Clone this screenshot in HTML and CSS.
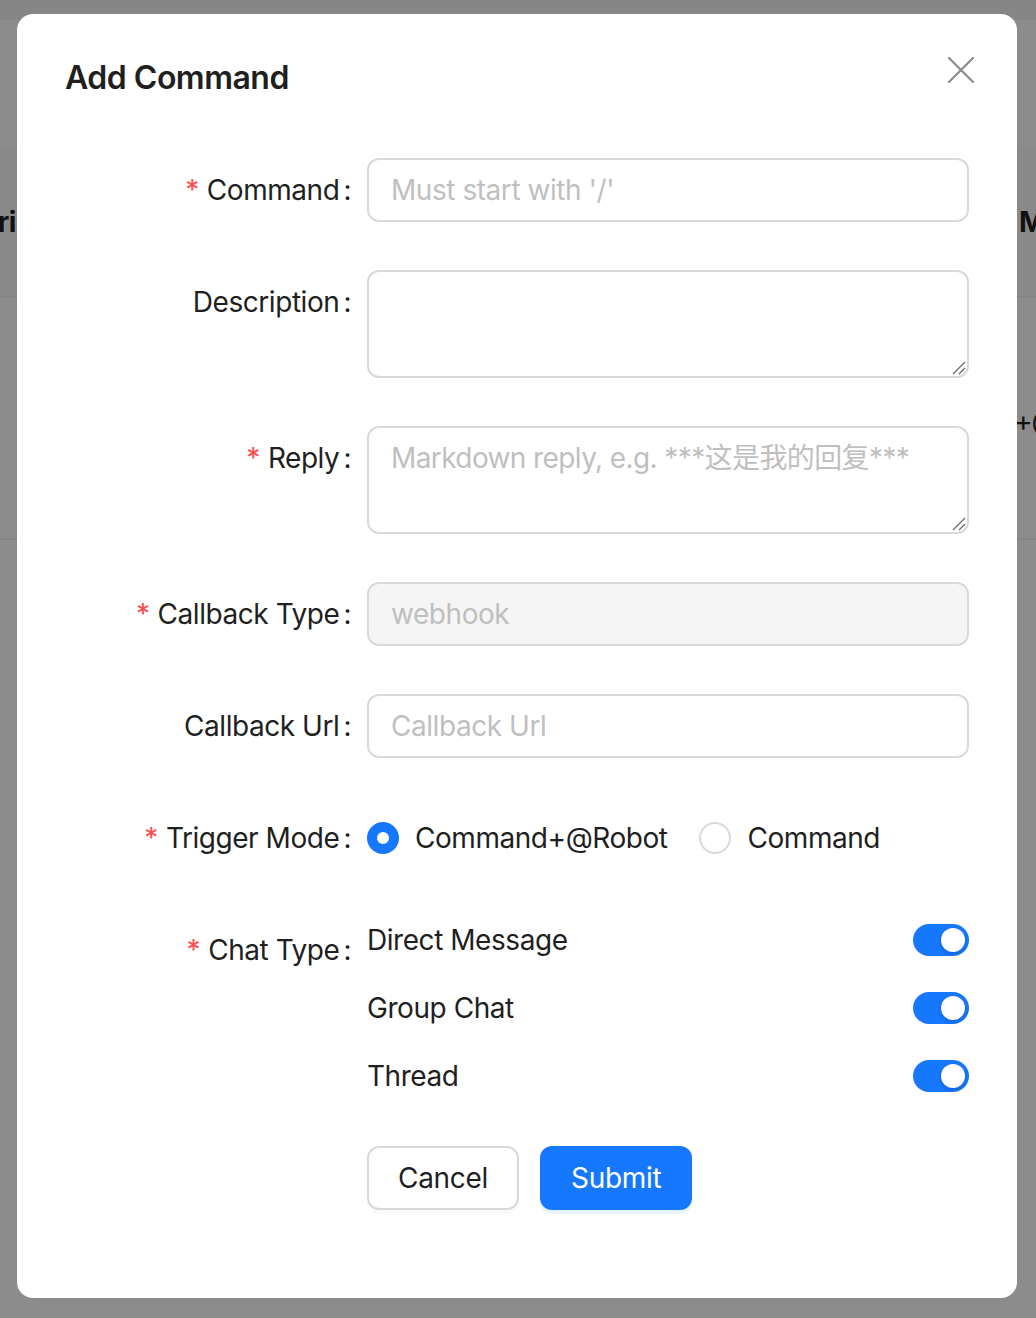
FILE: index.html
```html
<!DOCTYPE html>
<html lang="en">
<head>
<meta charset="utf-8">
<title>Add Command</title>
<link rel="stylesheet" href="styles.css">
</head>
<body>
<div class="page">
  <div class="topbar"></div>
  <div class="card">
    <div class="trow thead">
      <div class="cell cell-first"><span>ri</span></div>
      <div class="cell"></div>
      <div class="cell cell-last">M</div>
    </div>
    <div class="trow tbody">
      <div class="cell cell-first"><span></span></div>
      <div class="cell"></div>
      <div class="cell cell-row">+@</div>
    </div>
  </div>
</div>
<div class="mask"></div>
<div class="modal">
  <button class="close" aria-label="Close">
    <svg width="26" height="26" viewBox="0 0 26 26"><path d="M1 1 L25 25 M25 1 L1 25" stroke="#8c8c8c" stroke-width="2.2" fill="none" stroke-linecap="round"/></svg>
  </button>
  <div class="modal-title">Add Command</div>
  <form class="form">
    <div class="item">
      <div class="label"><span class="req">*</span>Command<span class="colon">:</span></div>
      <div class="control"><div class="input"><span class="ph">Must start with '/'</span></div></div>
    </div>
    <div class="item">
      <div class="label">Description<span class="colon">:</span></div>
      <div class="control"><div class="input textarea"><span class="ph"></span>
        <svg class="grip" width="16" height="16" viewBox="0 0 16 16"><path d="M15 3 L3 15 M15 9 L9 15" stroke="#6b6b6b" stroke-width="1.3" fill="none"/></svg></div></div>
    </div>
    <div class="item">
      <div class="label"><span class="req">*</span>Reply<span class="colon">:</span></div>
      <div class="control"><div class="input textarea"><span class="ph ph-md">Markdown reply, e.g. ***这是我的回复***</span>
        <svg class="grip" width="16" height="16" viewBox="0 0 16 16"><path d="M15 3 L3 15 M15 9 L9 15" stroke="#6b6b6b" stroke-width="1.3" fill="none"/></svg></div></div>
    </div>
    <div class="item">
      <div class="label"><span class="req">*</span>Callback Type<span class="colon">:</span></div>
      <div class="control"><div class="input disabled"><span class="ph">webhook</span></div></div>
    </div>
    <div class="item">
      <div class="label">Callback Url<span class="colon">:</span></div>
      <div class="control"><div class="input"><span class="ph">Callback Url</span></div></div>
    </div>
    <div class="item">
      <div class="label"><span class="req">*</span>Trigger Mode<span class="colon">:</span></div>
      <div class="control radios">
        <label class="radio"><span class="dot checked"></span><span class="rtext">Command+@Robot</span></label>
        <label class="radio"><span class="dot"></span><span class="rtext">Command</span></label>
      </div>
    </div>
    <div class="item">
      <div class="label"><span class="req">*</span>Chat Type<span class="colon">:</span></div>
      <div class="control chats">
        <div class="chat"><span>Direct Message</span><span class="switch"><span class="knob"></span></span></div>
        <div class="chat"><span>Group Chat</span><span class="switch"><span class="knob"></span></span></div>
        <div class="chat"><span>Thread</span><span class="switch"><span class="knob"></span></span></div>
      </div>
    </div>
    <div class="item">
      <div class="label"></div>
      <div class="control buttons">
        <button type="button" class="btn">Cancel</button>
        <button type="button" class="btn primary">Submit</button>
      </div>
    </div>
  </form>
</div>
</body>
</html>
```
FILE: styles.css
```css
* { box-sizing: border-box; }
html, body {
  margin: 0;
  padding: 0;
}
body {
  width: 1036px;
  height: 1318px;
  overflow: hidden;
  position: relative;
  font-family: Inter, "Noto Sans CJK SC", sans-serif;
  font-size: 28px;
  letter-spacing: -0.45px;
  color: #1f1f1f;
  background: #fff;
}

/* background page */
.page { height: 1318px; background: #fff; }
.topbar { height: 20px; background: #f5f5f5; }
.card { padding-top: 127px; }
.trow {
  display: grid;
  grid-template-columns: 17px 1000px 1fr;
  align-items: center;
  border-bottom: 2px solid #f0f0f0;
  white-space: nowrap;
}
.thead { height: 151px; background: #fafafa; font-weight: 700; }
.tbody { height: 242px; padding-top: 6px; }
.cell { overflow: visible; }
.cell-first { display: flex; justify-content: flex-end; padding-right: 1px; }
.cell-last { padding-left: 2px; }
.cell-row { margin-left: -3px; letter-spacing: -1px; }

.mask {
  position: fixed;
  inset: 0;
  background: rgba(0, 0, 0, 0.45);
}

/* modal */
.modal {
  position: absolute;
  left: 17px;
  top: 14px;
  width: 1000px;
  background: #fff;
  border-radius: 16px;
  padding: 40px 48px;
}
.close {
  position: absolute;
  top: 34px;
  right: 34px;
  width: 44px;
  height: 44px;
  border: 0;
  padding: 0;
  background: transparent;
  display: flex;
  align-items: center;
  justify-content: center;
}
.modal-title {
  font-size: 32px;
  font-weight: 600;
  line-height: 48px;
  margin-bottom: 56px;
  letter-spacing: -0.5px;
}

.form {
  display: flex;
  flex-direction: column;
  gap: 48px;
  padding-bottom: 48px;
}
.item {
  display: grid;
  grid-template-columns: 302px 602px;
}
.label {
  height: 64px;
  line-height: 64px;
  text-align: right;
  white-space: nowrap;
}
.req {
  color: #ff4d4f;
  margin-right: 8px;
  font-size: 28px;
}
.colon { margin: 0 16px 0 4px; }

.input {
  position: relative;
  height: 64px;
  border: 2px solid #d9d9d9;
  border-radius: 12px;
  padding: 8px 22px;
  line-height: 44px;
  background: #fff;
}
.input.textarea { height: 108px; }
.input.disabled { background: #f5f5f5; }
.ph { color: #bfbfbf; white-space: nowrap; }
.ph-md { letter-spacing: -0.6px; }
.grip {
  position: absolute;
  right: 1px;
  bottom: 1px;
}

.radios {
  display: flex;
  align-items: center;
  height: 64px;
}
.radio {
  display: flex;
  align-items: center;
  margin-right: 16px;
}
.dot {
  width: 32px;
  height: 32px;
  border-radius: 50%;
  border: 2px solid #d9d9d9;
  background: #fff;
  position: relative;
  flex: none;
}
.dot.checked {
  background: #1677ff;
  border-color: #1677ff;
}
.dot.checked::after {
  content: "";
  position: absolute;
  left: 8px;
  top: 8px;
  width: 12px;
  height: 12px;
  border-radius: 50%;
  background: #fff;
}
.rtext { padding: 0 16px; }

.chats { display: flex; flex-direction: column; gap: 24px; }
.chat {
  height: 44px;
  display: flex;
  align-items: center;
  justify-content: space-between;
}
.switch {
  width: 56px;
  height: 32px;
  border-radius: 16px;
  background: #1677ff;
  position: relative;
  flex: none;
}
.knob {
  position: absolute;
  top: 4px;
  right: 4px;
  width: 24px;
  height: 24px;
  border-radius: 50%;
  background: #fff;
  box-shadow: 0 2px 4px rgba(0, 35, 11, 0.2);
}

.buttons { display: flex; gap: 21px; }
.btn {
  height: 64px;
  padding: 0 29px;
  border: 2px solid #d9d9d9;
  border-radius: 12px;
  background: #fff;
  color: #1f1f1f;
  font-family: Inter, "Noto Sans CJK SC", sans-serif;
  font-size: 28px;
  letter-spacing: -0.3px;
  box-shadow: 0 4px 0 rgba(0, 0, 0, 0.02);
}
.btn.primary {
  background: #1677ff;
  border-color: #1677ff;
  color: #fff;
  box-shadow: 0 4px 0 rgba(5, 145, 255, 0.1);
}
```
